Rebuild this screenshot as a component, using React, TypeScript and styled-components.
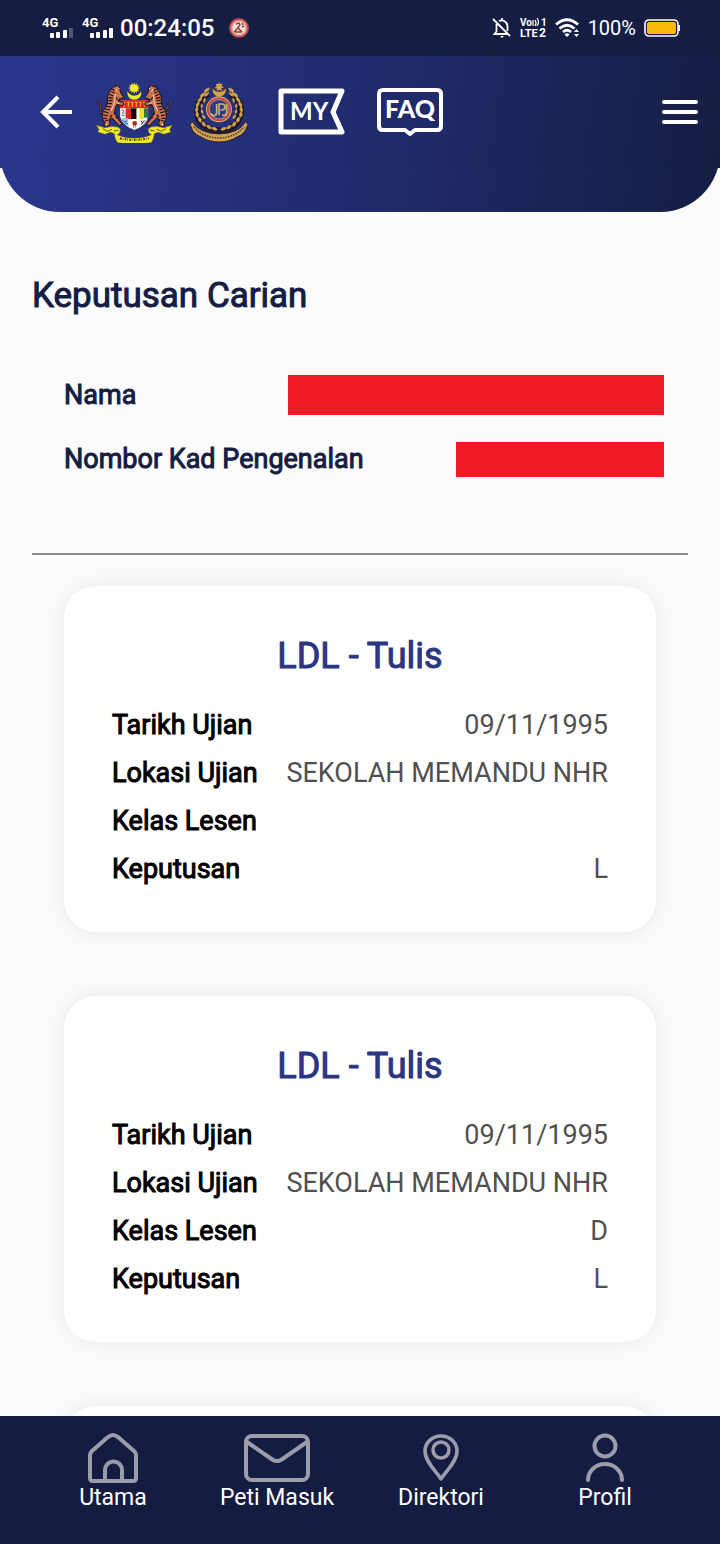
import styled, { createGlobalStyle } from "styled-components";

const GlobalStyle = createGlobalStyle`
    * {
        box-sizing: border-box;
        margin: 0;
        padding: 0;
    }
    body {
        font-family: Roboto, "Liberation Sans", sans-serif;
        background-color: #fbfbfb;
    }
`;

const Screen = styled.div`
    display: flex;
    flex-direction: column;
    height: 100vh;
    overflow: hidden;
`;

// status bar
const StatusBar = styled.div`
    display: flex;
    flex-shrink: 0;
    justify-content: space-between;
    align-items: center;
    height: 56px;
    padding: 0 40px 0 42px;
    background-color: #151d43;
    color: white;
`;
const StatusGroup = styled.div<{ $gap: number }>`
    display: flex;
    align-items: center;
    gap: ${(props) => props.$gap}px;
    svg {
        display: block;
    }
`;
const Clock = styled.time`
    font-size: 24px;
    font-weight: 500;
    line-height: 28px;
`;
const BatteryText = styled.span`
    font-size: 20px;
    line-height: 24px;
`;

// header
const AppBar = styled.header`
    display: flex;
    flex-shrink: 0;
    justify-content: space-between;
    align-items: center;
    height: 112px;
    padding: 0 20px 0 40px;
    background: linear-gradient(100deg, #2a378d 0%, #202b6b 55%, #151d43 100%);
`;
const AppBarGroup = styled.div<{ $gap: number }>`
    display: flex;
    align-items: center;
    gap: ${(props) => props.$gap}px;
`;
const IconButton = styled.button`
    display: flex;
    background: none;
    border: none;
    cursor: pointer;
`;
const Curve = styled.div`
    display: flex;
    flex-shrink: 0;
    align-items: flex-end;
    height: 44px;
    overflow: hidden;
`;
const CurveFill = styled.div`
    flex: 1;
    height: 104px;
    border-radius: 0 0 60px 60px;
    background: linear-gradient(100deg, #2a378d 0%, #202b6b 55%, #151d43 100%);
`;

// content
const Content = styled.main`
    flex: 1;
    min-height: 0;
    overflow-y: auto;
    scrollbar-width: none;
    padding: 62px 32px 0;
`;
const Title = styled.h1`
    font-size: 35px;
    font-weight: 400;
    line-height: 44px;
    color: #151d43;
    -webkit-text-stroke: 1px #151d43;
`;
const Person = styled.dl`
    display: flex;
    flex-direction: column;
    gap: 24px;
    padding: 57px 24px 74px 32px;
    border-bottom: 2px solid #8d8d8d;
`;
const PersonRow = styled.div`
    display: flex;
    justify-content: space-between;
    align-items: center;
    height: 40px;
`;
const PersonLabel = styled.dt`
    font-size: 27px;
    line-height: 32px;
    color: #151d43;
    -webkit-text-stroke: 1px #151d43;
`;
const Redacted = styled.dd<{ $width: number; $height: number }>`
    width: ${(props) => props.$width}px;
    height: ${(props) => props.$height}px;
    background-color: #f01a24;
`;

const Cards = styled.div`
    display: flex;
    flex-direction: column;
    gap: 64px;
    padding: 31px 32px;
`;
const Card = styled.article`
    padding: 48px 48px 39px;
    border-radius: 32px;
    background-color: white;
    box-shadow: 0 0 20px rgba(0, 0, 0, 0.08);
`;
const CardTitle = styled.h2`
    margin-bottom: 23px;
    font-size: 36px;
    font-weight: 400;
    line-height: 44px;
    text-align: center;
    color: #2a3682;
    -webkit-text-stroke: 1px #2a3682;
`;
const CardRow = styled.div`
    display: flex;
    justify-content: space-between;
    font-size: 27px;
    line-height: 48px;
`;
const CardLabel = styled.dt`
    color: black;
    -webkit-text-stroke: 1px black;
`;
const CardValue = styled.dd`
    color: #505050;
`;

// bottom navigation
const BottomNav = styled.nav`
    display: grid;
    grid-template-columns: repeat(4, 1fr);
    flex-shrink: 0;
    height: 128px;
    padding: 16px 33px 0 31px;
    background-color: #141c42;
`;
const NavLink = styled.a`
    display: flex;
    flex-direction: column;
    align-items: center;
    font-size: 23px;
    line-height: 28px;
    white-space: nowrap;
    color: white;
    text-decoration: none;
`;

function Signal({ weak }: { weak?: boolean }) {
    return (
        <svg width="32" height="24" viewBox="0 0 32 24" fill="white">
            <text x="0" y="11" fontSize="13" fontWeight="700" fontFamily="Roboto, sans-serif">4G</text>
            <rect x="8" y="17" width="4" height="5" rx="1" />
            <rect x="14" y="16" width="4" height="6" rx="1" />
            <rect x="21" y="14" width="4" height="8" rx="1" />
            <rect x="27" y="12" width="4" height="10" rx="1" opacity={weak ? 0.25 : 1} />
        </svg>
    );
}

function AppBadge() {
    return (
        <svg width="20" height="20" viewBox="0 0 20 20">
            <circle cx="10" cy="10" r="9" fill="#f6dccb" stroke="#b8454a" strokeWidth="2" />
            <circle cx="10" cy="10" r="7.5" fill="none" stroke="#d98a80" strokeWidth="1.6" />
            <path d="M7 6l3-1 1 2-3 4-3 3M9 10l4 4M6 14h7M13 5l1 2M13 9l2-1" fill="none" stroke="#8a3a3c" strokeWidth="1.4" />
        </svg>
    );
}

function BellOff() {
    return (
        <svg width="20" height="22" viewBox="0 0 20 22" fill="none" stroke="white" strokeWidth="1.8">
            <path d="M4.500 7v7.500L2.500 17h13M7 4a6 6 0 0 1 8.500 5v5M1 2l17 17M10 1v2" />
            <path d="M8 19h4l-2 2z" fill="white" stroke="none" />
        </svg>
    );
}

function VoLte() {
    return (
        <svg width="27" height="22" viewBox="0 0 27 22" fill="white" fontFamily="Roboto, sans-serif" fontWeight="700">
            <text x="0" y="9" fontSize="10">Vo</text>
            <text x="21" y="9" fontSize="10">1</text>
            <path d="M13 3v6M15 3q2 3 0 6M17 1q3 4 0 8" fill="none" stroke="white" strokeWidth="1.2" />
            <text x="0" y="20" fontSize="11">LTE</text>
            <text x="19" y="20" fontSize="12">2</text>
        </svg>
    );
}

function Wifi() {
    return (
        <svg width="25" height="20" viewBox="0 0 25 20" fill="none" stroke="white" strokeWidth="2.8">
            <path d="M1 6.500Q12 -3 23 6.500M4.500 10.500Q12 4 19.500 10.500M8 14Q12 10.500 16 14" />
            <path d="M9.500 16.500Q12 14 14.500 16.500L12 19z" fill="white" stroke="none" />
            <path d="M19 14l2.500-3 2.500 3zM19 16l2.500 3 2.500-3z" fill="white" stroke="none" />
        </svg>
    );
}

function Battery() {
    return (
        <svg width="36" height="20" viewBox="0 0 36 20">
            <rect x="1" y="2" width="33" height="16" rx="4" fill="none" stroke="white" strokeWidth="1.6" />
            <rect x="3" y="4" width="29" height="12" rx="2" fill="#fdb90b" />
            <path d="M35.200 7v6" stroke="white" strokeWidth="1.500" />
        </svg>
    );
}

function Tiger() {
    return (
        <g>
            <path d="M36 112q-12-4-10-16 3-10-4-16-3-5-9-3" fill="none" stroke="#1c1018" strokeWidth="6" />
            <path d="M36 112q-12-4-10-16 3-10-4-16-3-5-9-3" fill="none" stroke="#d98660" strokeWidth="3" strokeDasharray="4 3" />
            <path
                d="M80 27l-6-3-3 5-10 1-4 8-5 8-5 12-1 17-3 14-9 12-4 14 3 13 6 10-4 7 14 3 5-8-3-12 8-6 14 14 9 10 9-6-10-9-8-14-6-10 4-16 4-9 12 4 9-3-2-7-10-2-3-8 8-1 5-6-6-8z"
                fill="#c9714c"
                stroke="#1c1018"
                strokeWidth="3"
            />
            <path
                d="M60 35l8 6M57 44l10 4M52 52l12 5M50 61l12 3M49 70l12 1M46 79l14 1M45 88l12 2M40 96l14 3M36 104l14 4M33 114l14 2M34 124l10 0M39 132l9-3M60 114l-6 6M66 108l6 6M71 120l7 4M72 60l4 8M80 68l1 8"
                fill="none"
                stroke="#1c1018"
                strokeWidth="3.500"
            />
            <path d="M79 32l4 4M72 36l3 8M70 52l-1 16-4 16-8 18M73 77l10 2M44 139l-2 8" fill="none" stroke="#f3d5c4" strokeWidth="3" />
        </g>
    );
}

function Crest() {
    return (
        <svg width="78" height="62" viewBox="12 12 234 186" role="img" aria-label="Jata Negara">
            <path d="M107 38a22 22 0 1 0 40 0 20 17 0 0 1-40 0z" fill="#f3ec2c" stroke="#2b2430" strokeWidth="2" />
            <path
                d="M127 16l2 8 6-6-1 8 8-2-5 7 8 2-8 3 5 7-8-2 0 8-5-6-2 8-3-8-6 6 1-8-8 2 5-7-8-3 8-3-5-6 8 1-1-8 6 6z"
                fill="#f8ee20"
            />
            <path d="M84 70h85v48q-3 28-42 42-39-14-43-42z" fill="white" stroke="#37243c" strokeWidth="2" />
            <path d="M84 70h85v24H84z" fill="#e52320" />
            <path d="M96 75v15M109 75v15M121 75v15M133 75v15M145 75v15M157 75v15" stroke="#f4b624" strokeWidth="3" />
            <path d="M92 76h8M105 76h8M117 76h8M129 76h8M141 76h8M153 76h8" stroke="#f4b624" strokeWidth="3" />
            <path d="M85 94h16v28H85z" fill="#f4f4f4" />
            <path d="M89 99q8-2 6 4l-4 5q4 2 7 0M89 115h9" fill="none" stroke="#4c7861" strokeWidth="3" />
            <path d="M101 94h16v32h-16z" fill="#e02325" />
            <path d="M117 94h17v32h-17z" fill="#080808" />
            <path d="M134 94h8v32h-8z" fill="white" />
            <path d="M142 94h14v32h-14z" fill="#efe126" />
            <path d="M156 94h12v28h-12z" fill="#2f7a45" />
            <path d="M86 124h22l2 25q-19-10-24-25z" fill="#9fc8e5" />
            <path d="M91 130l6 5 8-4M99 140h8" stroke="#295aa0" strokeWidth="3" fill="none" />
            <path d="M125 132v20M131 132v20" stroke="#24743b" strokeWidth="2" />
            <circle cx="128" cy="139" r="7" fill="#cf2029" />
            <path d="M145 128h20l-6 10-12 6z" fill="#d9d9e5" />
            <path d="M147 132l5 5 6-6M147 142l5-3" stroke="#373040" strokeWidth="3" fill="none" />
            <Tiger />
            <g transform="translate(254 0) scale(-1 1)">
                <Tiger />
            </g>
            <path
                d="M13 144l25 8 22-4 18 2 8 7-3 12-7 4q20 10 51 10t51-10l-7-4-3-12 8-7 18-2 22 4 25-8-8 14 4 7-22 7-16-6-12 4-2 12q-3 11-8 15-26 5-50 5t-50-5q-5-4-8-15l-2-12-12-4-16 6-22-7 4-7z"
                fill="#f1e62a"
                stroke="#4e4a32"
                strokeWidth="1.500"
            />
            <path d="M84 184q43 9 86 0" fill="none" stroke="#36320d" strokeWidth="6" strokeDasharray="5 3 2 4" />
            <path d="M32 155l13 8 15-6M222 155l-13 8-15-6M66 162l14-3M188 162l-14-3" fill="none" stroke="#635f1a" strokeWidth="3" />
        </svg>
    );
}

function JpjLogo() {
    return (
        <svg width="58" height="62" viewBox="12 10 174 186" role="img" aria-label="JPJ">
            <path d="M80 29a21 21 0 1 0 39 0 20 16 0 0 1-39 0z" fill="#d7a34d" stroke="#242036" strokeWidth="2" />
            <path d="M99 12l3 8 8-3-3 8 7 4-8 3 2 8-8-4-6 5-1-8-8-2 7-5-3-8 8 2z" fill="#d7a34d" />
            {[1, -1].map((side) => (
                <g key={side} transform={`translate(99 98) scale(${side} 1)`}>
                    <path d="M-32-50A58 58 0 0 0 0 60" fill="none" stroke="#1d1a2c" strokeWidth="20" />
                    <path
                        d="M-29-67q-14 1-15 13 13 0 15-13zM-39-53q-15 0-18 12 13 2 18-12zM-51-40q-13 4-12 16 12-3 12-16zM-60-26q-12 6-8 17 11-5 8-17zM-65-11q-10 8-3 17 9-8 3-17zM-66 4q-8 10 2 17 7-9-2-17zM-60 20q-6 12 6 16 5-11-6-16zM-50 34q-3 12 9 14 3-11-9-14zM-37 45q2 12 14 10-2-11-14-10zM-22 52q5 11 17 6-6-10-17-6zM-31-54q-11 4-11 12 10-1 11-12zM-42-37q-7 6-4 14 8-5 4-14zM-52-20q-5 8 0 14 6-7 0-14zM-53-3q-3 9 4 13 4-8-4-13zM-50 14q-1 9 8 11 2-9-8-11z"
                        fill="#d6a14b"
                        stroke="#d6a14b"
                        strokeWidth="2"
                    />
                </g>
            ))}
            <circle cx="99" cy="95" r="37" fill="#2b3a83" stroke="#e0b063" strokeWidth="4" />
            <circle cx="99" cy="95" r="33" fill="none" stroke="#d6453c" strokeWidth="5" />
            <circle cx="99" cy="95" r="29" fill="none" stroke="#e6c489" strokeWidth="2" />
            <path
                d="M92 79v25q0 10-8 10t-9-8M99 113V79h9q9 0 9 9t-9 9h-5M122 79v24q0 10-9 10h-5"
                fill="none"
                stroke="#c9ad7d"
                strokeWidth="5"
            />
            <path
                d="M20 133q-6 2-8 8l9 20q10 13 26 18 21 14 52 14t52-14q16-5 26-18l9-20q-2-6-8-8-20 34-79 36-59-2-79-36z"
                fill="#d5a14d"
                stroke="#252033"
                strokeWidth="3"
            />
            <path d="M24 147q24 32 75 34 51-2 75-34" fill="none" stroke="#5a4344" strokeWidth="5" strokeDasharray="5 3" />
        </svg>
    );
}

function MyFlag() {
    return (
        <svg width="68" height="48" viewBox="0 0 68 48" fill="none">
            <path d="M3 3h61L55 24l9 20H3z" stroke="white" strokeWidth="5" strokeLinejoin="round" />
            <text x="12" y="32" fill="white" fontSize="24" fontFamily="Lato, sans-serif" fontWeight="700">MY</text>
        </svg>
    );
}

function FaqBubble() {
    return (
        <svg width="68" height="50" viewBox="0 0 68 50" fill="none">
            <path
                d="M7 3h54q4 0 4 4v32q0 4-4 4H39l-5 4-5-4H7q-4 0-4-4V7q0-4 4-4z"
                stroke="white"
                strokeWidth="4"
                strokeLinejoin="round"
            />
            <text x="9" y="31" fill="white" fontSize="25" fontFamily="Lato, sans-serif" fontWeight="900">FAQ</text>
        </svg>
    );
}

function HomeIcon() {
    return (
        <svg width="52" height="52" viewBox="0 0 52 52" fill="none" stroke="#9c9dab" strokeWidth="4">
            <path d="M3 23q0-2 2-4L21 5q5-4 10 0l16 14q2 2 2 4v23q0 3-3 3H6q-3 0-3-3z" />
            <path d="M18 49V38a8.500 8.500 0 0 1 17 0v11" />
        </svg>
    );
}

function MailIcon() {
    return (
        <svg width="68" height="52" viewBox="0 0 68 52" fill="none" stroke="#9c9dab" strokeWidth="4">
            <rect x="3" y="4" width="62" height="44" rx="6" />
            <path d="M4 10l26 18q4 2 8 0l26-18" />
        </svg>
    );
}

function PinIcon() {
    return (
        <svg width="36" height="52" viewBox="0 0 36 52" fill="none" stroke="#9c9dab" strokeWidth="3.500">
            <path d="M18 47C14 40 2 30 2 19a16 15 0 0 1 32 0c0 11-12 21-16 28z" strokeLinejoin="round" />
            <circle cx="18" cy="18" r="8" />
        </svg>
    );
}

function ProfileIcon() {
    return (
        <svg width="40" height="52" viewBox="0 0 40 52" fill="none" stroke="#9c9dab" strokeWidth="4">
            <circle cx="20" cy="14" r="10.500" />
            <path d="M3 48a17 16 0 0 1 34 0" strokeLinecap="round" />
        </svg>
    );
}

const results = [
    { title: "LDL - Tulis", date: "09/11/1995", place: "SEKOLAH MEMANDU NHR", licence: "", result: "L" },
    { title: "LDL - Tulis", date: "09/11/1995", place: "SEKOLAH MEMANDU NHR", licence: "D", result: "L" },
];

const links = [
    { label: "Utama", icon: <HomeIcon /> },
    { label: "Peti Masuk", icon: <MailIcon /> },
    { label: "Direktori", icon: <PinIcon /> },
    { label: "Profil", icon: <ProfileIcon /> },
];

function App() {
    return (
        <Screen>
            <GlobalStyle />
            <StatusBar>
                <StatusGroup $gap={14}>
                    <StatusGroup $gap={8}>
                        <Signal weak />
                        <StatusGroup $gap={6}>
                            <Signal />
                            <Clock>00:24:05</Clock>
                        </StatusGroup>
                    </StatusGroup>
                    <AppBadge />
                </StatusGroup>
                <StatusGroup $gap={8}>
                    <BellOff />
                    <VoLte />
                    <Wifi />
                    <BatteryText>100%</BatteryText>
                    <Battery />
                </StatusGroup>
            </StatusBar>
            <AppBar>
                <AppBarGroup $gap={30}>
                    <AppBarGroup $gap={16}>
                        <IconButton aria-label="Kembali">
                            <svg width="40" height="40" viewBox="0 0 40 40" fill="none" stroke="white" strokeWidth="4">
                                <path d="M32 20H4M18 5L3 20l15 15" />
                            </svg>
                        </IconButton>
                        <Crest />
                        <JpjLogo />
                    </AppBarGroup>
                    <IconButton aria-label="MY"><MyFlag /></IconButton>
                    <IconButton aria-label="FAQ"><FaqBubble /></IconButton>
                </AppBarGroup>
                <IconButton aria-label="Menu">
                    <svg width="40" height="40" viewBox="0 0 40 40" stroke="white" strokeWidth="4" strokeLinecap="round">
                        <path d="M4 10h32M4 20h32M4 30h32" />
                    </svg>
                </IconButton>
            </AppBar>
            <Curve><CurveFill /></Curve>

            <Content>
                <Title>Keputusan Carian</Title>
                <Person>
                    <PersonRow>
                        <PersonLabel>Nama</PersonLabel>
                        <Redacted $width={376} $height={40} />
                    </PersonRow>
                    <PersonRow>
                        <PersonLabel>Nombor Kad Pengenalan</PersonLabel>
                        <Redacted $width={208} $height={35} />
                    </PersonRow>
                </Person>
                <Cards>
                    {results.map((item, i) => (
                        <Card key={i}>
                            <CardTitle>{item.title}</CardTitle>
                            <dl>
                                <CardRow><CardLabel>Tarikh Ujian</CardLabel><CardValue>{item.date}</CardValue></CardRow>
                                <CardRow><CardLabel>Lokasi Ujian</CardLabel><CardValue>{item.place}</CardValue></CardRow>
                                <CardRow><CardLabel>Kelas Lesen</CardLabel><CardValue>{item.licence}</CardValue></CardRow>
                                <CardRow><CardLabel>Keputusan</CardLabel><CardValue>{item.result}</CardValue></CardRow>
                            </dl>
                        </Card>
                    ))}
                    <Card aria-hidden="true" />
                </Cards>
            </Content>

            <BottomNav>
                {links.map((link) => (
                    <NavLink href="#" key={link.label}>
                        {link.icon}
                        {link.label}
                    </NavLink>
                ))}
            </BottomNav>
        </Screen>
    );
}

export default App;
